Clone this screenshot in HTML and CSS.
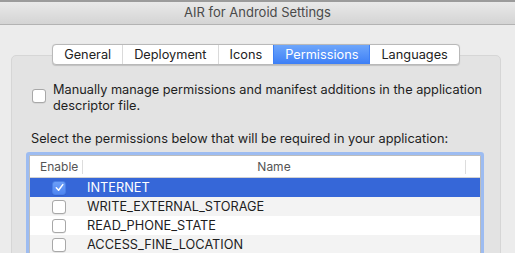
FILE: index.html
```html
<!DOCTYPE html>
<html>
<head>
<meta charset="utf-8">
<link rel="stylesheet" href="styles.css">
</head>
<body>
<div class="window">
  <div class="titlebar">AIR for Android Settings</div>
  <div class="content">
    <div class="tabs">
      <div class="tab">General</div>
      <div class="tab">Deployment</div>
      <div class="tab">Icons</div>
      <div class="tab active">Permissions</div>
      <div class="tab">Languages</div>
    </div>
    <div class="group">
      <div class="manual">
        <span class="cb"></span>
        <div class="manual-text">Manually manage permissions and manifest additions in the application descriptor file.</div>
      </div>
      <div class="select-label">Select the permissions below that will be required in your application:</div>
      <div class="table">
        <div class="thead">
          <div class="th th-enable">Enable</div>
          <div class="th th-name">Name</div>
          <div class="th th-rest"></div>
        </div>
        <div class="row selected">
          <div class="cell-enable"><span class="cb checked"><svg viewBox="0 0 13 13" width="13" height="13"><path d="M3.3 6.8 L5.6 9.2 L9.8 3.6" fill="none" stroke="#fff" stroke-width="1.5" stroke-linecap="round" stroke-linejoin="round"/></svg></span></div>
          <div class="cell-name">INTERNET</div>
        </div>
        <div class="row alt">
          <div class="cell-enable"><span class="cb"></span></div>
          <div class="cell-name">WRITE_EXTERNAL_STORAGE</div>
        </div>
        <div class="row">
          <div class="cell-enable"><span class="cb"></span></div>
          <div class="cell-name">READ_PHONE_STATE</div>
        </div>
        <div class="row alt">
          <div class="cell-enable"><span class="cb"></span></div>
          <div class="cell-name">ACCESS_FINE_LOCATION</div>
        </div>
      </div>
    </div>
  </div>
</div>
</body>
</html>
```

FILE: styles.css
```css
html, body {
  margin: 0;
  padding: 0;
  width: 515px;
  height: 253px;
  overflow: hidden;
  background: #ececec;
  font-family: "Inter", "Liberation Sans", Arial, sans-serif;
  font-size: 12.75px;
  color: #222;
}

.window {
  width: 515px;
  height: 253px;
  overflow: hidden;
}

.titlebar {
  height: 22px;
  border-top: 2px solid #9b9b9b;
  border-bottom: 1px solid #b3b3b3;
  background: linear-gradient(#e9e9e9, #d4d4d4);
  text-align: center;
  line-height: 21px;
  font-size: 13px;
  color: #4a4a4a;
}

.content {
  padding: 19px 14px 0 11px;
}

.tabs {
  display: flex;
  width: max-content;
  margin: 0 auto -10px;
  position: relative;
  z-index: 1;
  background: #fff;
  border: 1px solid #b9b9b9;
  border-radius: 4px;
  box-shadow: 0 0.5px 1px rgba(0,0,0,0.15);
  height: 19px;
  overflow: hidden;
}

.tab {
  padding: 0 11px;
  line-height: 19px;
  border-left: 1px solid #dadada;
  color: #222;
}
.tab:first-child { border-left: none; }
.tab.active {
  background: linear-gradient(#6ea6fb, #3d7ff6);
  color: #fff;
  border-left-color: #3d7ff6;
}
.tab.active + .tab { border-left-color: #3d7ff6; }

.group {
  background: #e3e3e3;
  border: 1px solid #d6d6d6;
  border-radius: 5px;
  height: 260px;
  padding: 26px 0 0 0;
  box-sizing: border-box;
}

.manual {
  display: flex;
  align-items: flex-start;
  padding-left: 20px;
}
.manual .cb {
  margin-top: 7px;
  margin-right: 7px;
}
.manual-text {
  line-height: 16px;
  width: 440px;
  color: #1e1e1e;
}

.cb {
  display: inline-block;
  width: 12px;
  height: 12px;
  background: #fff;
  border: 0.5px solid #a8a8a8;
  border-radius: 3px;
  box-shadow: 0 0.5px 0.5px rgba(0,0,0,0.12);
  flex: none;
  box-sizing: content-box;
}
.cb svg { display: block; margin: -0.5px 0 0 -0.5px; }
.cb.checked {
  background: linear-gradient(#6c9ef7, #4f86f2);
  border-color: #4a7fe6;
}

.select-label {
  margin-top: 17px;
  padding-left: 19px;
  line-height: 16px;
  color: #1e1e1e;
}

.table {
  margin: 8px 0 0 17px;
  width: 450px;
  border: 1px solid #bdbdbd;
  border-radius: 1px;
  box-shadow: 0 0 0 3px #9dbcf1;
  background: #fff;
}

.thead {
  display: flex;
  height: 21px;
  border-bottom: 1px solid #d2d2d2;
  align-items: center;
  font-size: 12px;
  color: #555;
}
.th {
  height: 21px;
  line-height: 21px;
}
.th-enable {
  width: 53px;
  padding-left: 10px;
  box-sizing: border-box;
  border-right: 1px solid #dddddd;
  height: 14px;
  line-height: 14px;
}
.th-name {
  width: 382px;
  text-align: center;
  border-right: 1px solid #dddddd;
  height: 14px;
  line-height: 14px;
}
.th-rest { flex: 1; }

.row {
  display: flex;
  height: 19px;
  align-items: center;
  background: #fff;
}
.row.alt { background: #f3f3f3; }
.row.selected { background: #3667d8; color: #fff; }

.cell-enable {
  width: 57px;
  padding-left: 22px;
  box-sizing: border-box;
  display: flex;
  align-items: center;
}
.cell-name {
  line-height: 19px;
  color: inherit;
}
.row .cell-name { color: #1e1e1e; }
.row.selected .cell-name { color: #fff; }
```
